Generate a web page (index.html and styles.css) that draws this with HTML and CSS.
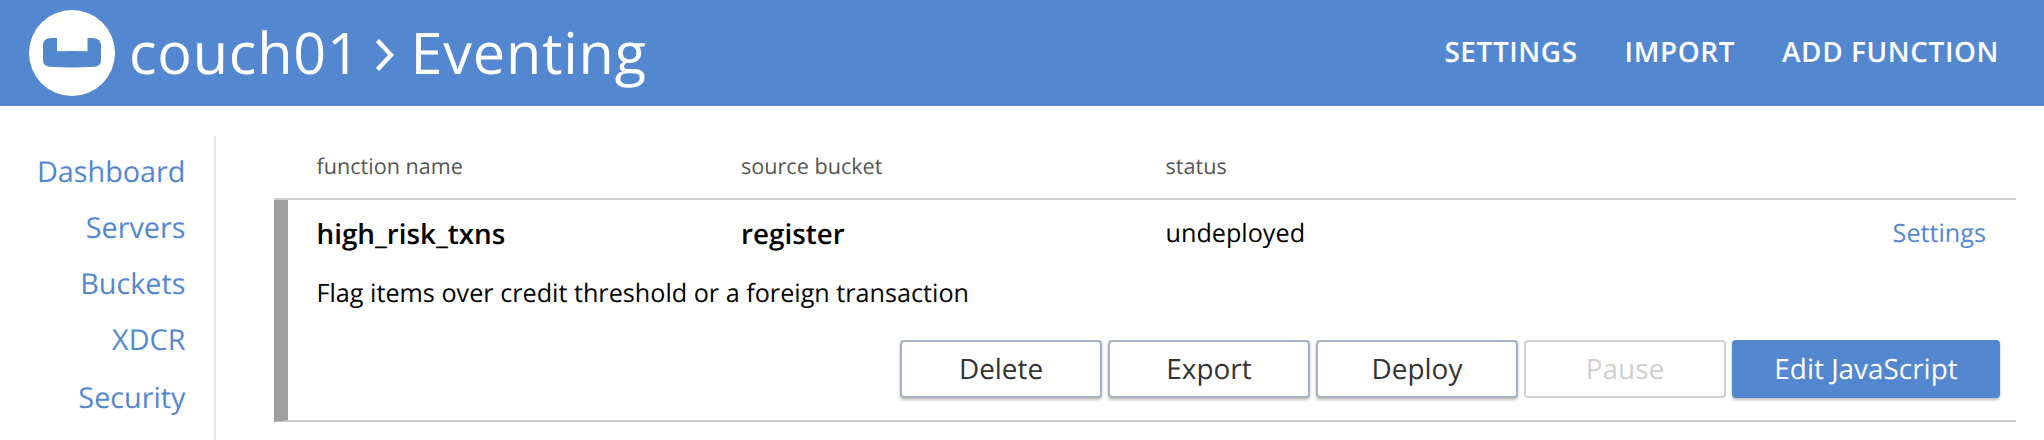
FILE: index.html
```
<!DOCTYPE html>
<html lang="en">
<head>
<meta charset="utf-8">
<title>Eventing</title>
<link rel="stylesheet" href="styles.css">
</head>
<body>
<header class="masthead">
  <svg class="logo" viewBox="0 0 86 86" width="86" height="86" aria-hidden="true">
    <circle cx="43" cy="43" r="43" fill="#fff"/>
    <path fill="#5387d0" d="M28 28v13.3q15-.6 30.500 0V28h5.500q8 .5 8 8v14q0 6-6.500 6.800-22.500 1.500-45 0-6.500-.8-6.500-6.800V36q0-8 8-8z"/>
  </svg>
  <h1 class="title"><span>couch01</span>
    <svg class="chevron" viewBox="0 0 20 34" width="20" height="34" aria-hidden="true"><path d="M2.500 2.500 16 17 2.500 31.500" fill="none" stroke="#fff" stroke-width="4.400"/></svg>
    <span>Eventing</span></h1>
  <nav class="actions"><a>SETTINGS</a><a>IMPORT</a><a>ADD FUNCTION</a></nav>
</header>
<div class="body">
  <nav class="sidebar"><a>Dashboard</a><a>Servers</a><a>Buckets</a><a>XDCR</a><a class="spaced">Security</a></nav>
  <main class="content">
    <div class="columns head"><span>function name</span><span>source bucket</span><span>status</span></div>
    <section class="row">
      <div class="columns"><strong>high_risk_txns</strong><strong>register</strong><span class="status">undeployed</span><a class="settings">Settings</a></div>
      <p class="description">Flag items over credit threshold or a foreign transaction</p>
      <div class="buttons">
        <button class="button">Delete</button>
        <button class="button">Export</button>
        <button class="button">Deploy</button>
        <button class="button disabled" disabled>Pause</button>
        <button class="button primary">Edit JavaScript</button>
      </div>
    </section>
  </main>
</div>
</body>
</html>
```
FILE: styles.css
```
* { box-sizing: border-box; }
body {
  margin: 0;
  height: 440px;
  overflow: hidden;
  background: #fff;
  color: #000;
  font-family: "Open Sans", sans-serif;
  text-rendering: geometricPrecision;
}
.masthead {
  display: flex;
  align-items: center;
  height: 106px;
  padding: 0 45px 0 29px;
  background: #5387d0;
  color: #fff;
}
.logo { flex: none; }
.title {
  display: flex;
  align-items: center;
  margin: 0 auto 0 14px;
  font-size: 57.6px;
  font-weight: 400;
  letter-spacing: .75px;
  line-height: 106px;
  padding-bottom: 2px;
}
.chevron { margin: 6px 16px 0 14px; }
.actions {
  display: flex;
  gap: 47px;
  padding-bottom: 3px;
  font-size: 27.9px;
  font-weight: 600;
  letter-spacing: .6px;
}
.body { display: flex; height: 334px; padding-top: 30px; }
.sidebar {
  display: flex;
  flex-direction: column;
  width: 216px;
  padding: 8px 28.5px 0 0;
  border-right: 2px solid #e8e8e8;
  color: #5387d0;
  font-size: 28.8px;
  line-height: 56px;
  text-align: right;
}
.spaced { margin-top: 2px; }
.content { width: 1742px; margin-left: 58px; }
.columns {
  display: grid;
  grid-template-columns: 424.500px 424.500px 1fr auto;
  align-items: baseline;
}
.head {
  height: 64px;
  padding: 0 30px 0 42.5px;
  border-bottom: 2px solid #ccc;
  color: #555;
  font-size: 21.6px;
  line-height: 61px;
}
.row {
  height: 222px;
  padding: 12px 16px 0 28.5px;
  border: 0 solid #ccc;
  border-width: 0 0 2px 14px;
  border-left-color: #a0a0a0;
}
.row .columns { height: 60px; padding-right: 14px; line-height: 44px; }
.row strong { font-size: 27.8px; font-weight: 600; }
.status, .settings { font-size: 25.2px; position: relative; top: -2px; }
.settings { color: #5387d0; }
.description { margin: 0; height: 68px; font-size: 25.2px; line-height: 42px; }
.buttons { display: flex; justify-content: flex-end; gap: 6px; }
.button {
  width: 202px;
  height: 58px;
  padding: 0;
  border: 2px solid #a6b2c1;
  border-radius: 4px;
  background: #fff;
  box-shadow: 0 2px 3px rgba(0, 0, 0, .25);
  color: #333;
  font: 400 27.9px/54px "Open Sans", sans-serif;
  text-rendering: inherit;
}
.disabled { border-color: #d0d0d0; color: #d0d0d0; box-shadow: none; }
.primary { width: 268px; border-color: #5387d0; background: #5387d0; color: #fff; }
```
